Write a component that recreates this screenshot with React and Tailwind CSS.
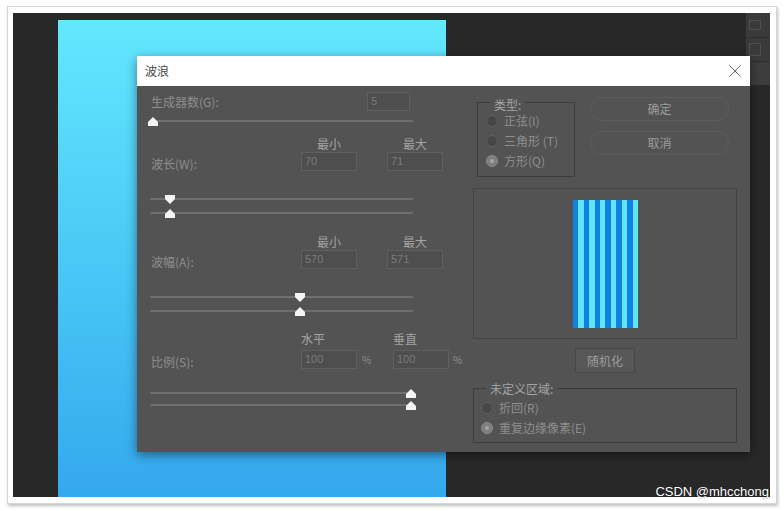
import React from 'react';

const labelCls = "text-[12px] leading-[14px] text-[#8e8e8e]";
const headCls = "text-[12px] leading-[14px] text-[#a4a4a4]";

const NumBox = ({ value, w = 'w-[56px]' }) => (
  <div className={`${w} h-[19px] shrink-0 bg-[#4e4e4e] border border-[#5f5f5f] px-[3px] text-[11px] leading-[17px] text-[#7a7a7a] font-['Liberation_Sans',sans-serif]`}>
    {value}
  </div>
);

const Thumb = ({ down, left }) => (
  <svg
    className={`absolute ${down ? 'top-[2px]' : 'top-[2px]'}`}
    style={{ left }}
    width="10"
    height="9"
    viewBox="0 0 10 9"
  >
    {down ? (
      <polygon points="0,0 10,0 10,4 5,9 0,4" fill="#f4f4f4" />
    ) : (
      <polygon points="0,9 0,5 5,0 10,5 10,9" fill="#f4f4f4" />
    )}
  </svg>
);

const Slider = ({ pos, down, className = '' }) => (
  <div className={`relative w-[263px] h-[12px] -ml-[1px] ${className}`}>
    <div className="absolute left-0 right-0 top-[5px] h-[2px] bg-[#6f6f6f] rounded-full" />
    <Thumb down={down} left={pos - 5} />
  </div>
);

const Radio = ({ checked, label, className = '' }) => (
  <div className={`flex items-center h-[20px] ${className}`}>
    <div
      className={`w-[12px] h-[12px] shrink-0 rounded-full border flex items-center justify-center ${
        checked ? 'bg-[#7e7e7e] border-[#8a8a8a]' : 'bg-[#464646] border-[#606060]'
      }`}
    >
      {checked && <div className="w-[4px] h-[4px] rounded-full bg-[#a8a8a8]" />}
    </div>
    <span className={`ml-[6px] ${labelCls}`}>{label}</span>
  </div>
);

const MinMaxHead = () => (
  <div className="flex h-[14px]">
    <div className="w-[150px]" />
    <div className={`w-[56px] text-center ${headCls}`}>最小</div>
    <div className="w-[30px]" />
    <div className={`w-[56px] text-center ${headCls}`}>最大</div>
  </div>
);

export default function App() {
  return (
    <div className="relative w-[784px] h-[511px] bg-white overflow-hidden font-['Noto_Sans_CJK_SC',sans-serif]">
      {/* screenshot frame */}
      <div className="ml-[7px] mt-[6px] w-[770px] h-[498px] bg-white border border-[#d6d6d6] pl-[5px] pr-[6px] py-[6px] shadow-[1px_2px_3px_rgba(0,0,0,0.25)]">
        <div className="relative w-full h-full bg-[#282828] overflow-hidden">
          {/* document canvas */}
          <div className="absolute left-[45px] top-[7px] w-[388px] h-[480px] bg-linear-to-b from-[#63e8fe] to-[#33a8ed]" />

          {/* right panel strip */}
          <div className="absolute left-[733px] top-0 w-[24px] h-[72px] bg-[#3a3a3a] flex flex-col">
            <div className="h-[25px] border-b border-[#2e2e2e] flex items-center pl-[3px]">
              <div className="w-[12px] h-[10px] border border-[#4e4e4e]" />
            </div>
            <div className="h-[24px] border-b border-[#2e2e2e] flex items-center pl-[3px]">
              <div className="w-[12px] h-[13px] border border-[#4e4e4e]" />
            </div>
            <div className="flex-1 bg-[#3d3d3d]" />
          </div>

          {/* wave dialog */}
          <div className="absolute left-[124px] top-[43px] w-[613px] h-[396px] bg-[#535353] shadow-[0_3px_10px_rgba(0,0,0,0.45)] flex flex-col">
            <div className="relative h-[30px] bg-white flex items-center pl-[8px]">
              <span className="text-[12px] text-[#4a4a4a]">波浪</span>
              <svg className="absolute right-[9px] top-[9px]" width="12" height="12" viewBox="0 0 12 12">
                <path d="M0.5 0.5 L11.5 11.5 M11.5 0.5 L0.5 11.5" stroke="#6a6a6a" strokeWidth="1" />
              </svg>
            </div>

            <div className="flex flex-1 pl-[14px]">
              {/* left column */}
              <div className="w-[322px] flex flex-col">
                <div className="flex items-center h-[19px] mt-[6px]">
                  <div className={`w-[216px] ${labelCls}`}>生成器数(G):</div>
                  <NumBox value="5" w="w-[43px]" />
                </div>
                <Slider pos={3} className="mt-[4px]" />

                <div className="mt-[10px]">
                  <MinMaxHead />
                </div>
                <div className="flex items-end h-[19px] mt-[1px]">
                  <div className={`w-[150px] ${labelCls}`}>波长(W):</div>
                  <NumBox value="70" />
                  <div className="w-[30px]" />
                  <NumBox value="71" />
                </div>
                <Slider pos={20} down className="mt-[22px]" />
                <Slider pos={20} className="mt-[2px]" />

                <div className="mt-[16px]">
                  <MinMaxHead />
                </div>
                <div className="flex items-end h-[19px] mt-[1px]">
                  <div className={`w-[150px] ${labelCls}`}>波幅(A):</div>
                  <NumBox value="570" />
                  <div className="w-[30px]" />
                  <NumBox value="571" />
                </div>
                <Slider pos={150} down className="mt-[22px]" />
                <Slider pos={150} className="mt-[2px]" />

                <div className="flex h-[14px] mt-[15px]">
                  <div className="w-[150px]" />
                  <div className={`w-[92px] ${headCls}`}>水平</div>
                  <div className={headCls}>垂直</div>
                </div>
                <div className="flex items-end h-[19px] mt-[4px]">
                  <div className={`w-[150px] ${labelCls}`}>比例(S):</div>
                  <NumBox value="100" />
                  <div className="w-[36px] pl-[5px] text-[10px] leading-[17px] text-[#8e8e8e] self-center">%</div>
                  <NumBox value="100" />
                  <div className="pl-[4px] text-[10px] leading-[17px] text-[#8e8e8e] self-center">%</div>
                </div>
                <Slider pos={261} className="mt-[18px]" />
                <Slider pos={261} />
              </div>

              {/* right column */}
              <div className="w-[264px] flex flex-col">
                <div className="flex items-start mt-[11px]">
                  <div className="relative ml-[4px] mt-[5px] w-[98px] h-[75px] border border-[#3c3c3c] pl-[8px] pt-[8px]">
                    <span className={`absolute -top-[5px] left-[12px] px-[4px] bg-[#535353] ${headCls}`}>类型:</span>
                    <Radio label="正弦(I)" />
                    <Radio label="三角形 (T)" />
                    <Radio checked label="方形(Q)" className="h-[19px]" />
                  </div>
                  <div className="ml-[15px] w-[139px] flex flex-col">
                    <button className="h-[24px] rounded-full border border-[#5d5d5d] text-[12px] text-[#9c9c9c]">确定</button>
                    <button className="mt-[10px] h-[24px] rounded-full border border-[#5d5d5d] text-[12px] text-[#9c9c9c]">取消</button>
                  </div>
                </div>

                <div className="mt-[11px] h-[151px] border border-[#434343] flex justify-center items-start pt-[11px]">
                  <div className="ml-[1px] w-[65px] h-[128px] grid grid-cols-12">
                    <div className="bg-[#1181e2]" />
                    <div className="bg-[#61e5fd]" />
                    <div className="bg-[#1181e2]" />
                    <div className="bg-[#61e5fd]" />
                    <div className="bg-[#1181e2]" />
                    <div className="bg-[#61e5fd]" />
                    <div className="bg-[#1181e2]" />
                    <div className="bg-[#61e5fd]" />
                    <div className="bg-[#1181e2]" />
                    <div className="bg-[#61e5fd]" />
                    <div className="bg-[#1181e2]" />
                    <div className="bg-[#61e5fd]" />
                  </div>
                </div>

                <button className="mt-[9px] self-center w-[60px] h-[25px] border border-[#474747] bg-[#575757] text-[12px] text-[#9c9c9c]">随机化</button>

                <div className="relative mt-[15px] h-[55px] border border-[#3c3c3c] pl-[7px] pt-[9px]">
                  <span className={`absolute -top-[7px] left-[12px] px-[4px] bg-[#535353] ${headCls}`}>未定义区域:</span>
                  <Radio label="折回(R)" />
                  <Radio checked label="重复边缘像素(E)" />
                </div>
              </div>
            </div>
          </div>
        </div>
      </div>

      {/* watermark */}
      <div className="absolute right-[15px] top-[484px] text-[13px] leading-[16px] text-white font-['Liberation_Sans',sans-serif] [text-shadow:0_0_1px_rgba(0,0,0,0.7)]">
        CSDN @mhcchong
      </div>
    </div>
  );
}
